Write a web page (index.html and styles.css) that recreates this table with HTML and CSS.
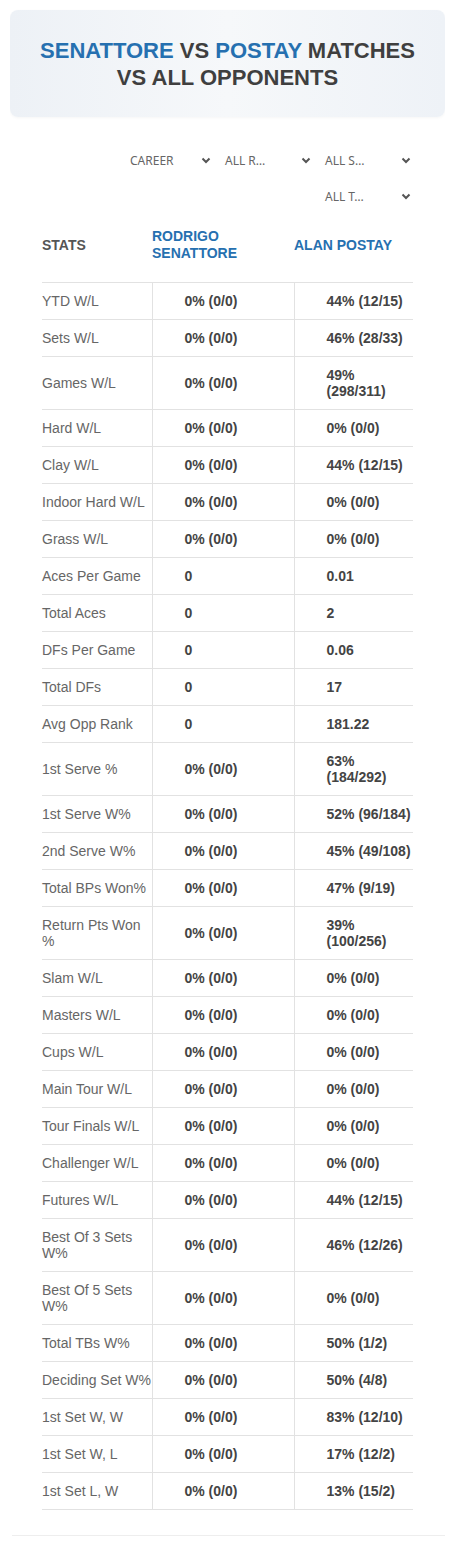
FILE: index.html
```html
<!DOCTYPE html>
<html lang="en">
<head>
    <meta charset="UTF-8">
    <meta name="viewport" content="width=device-width, initial-scale=1.0">
    <title>Senattore vs Postay</title>
    <link rel="stylesheet" href="styles.css">
</head>
<body>
    <!-- Cabecera -->
    <div class="title-box">
        <h1><span class="blue">SENATTORE</span> VS <span class="blue">POSTAY</span> MATCHES VS ALL OPPONENTS</h1>
    </div>

    <div class="content">
        <!-- Filtros -->
        <div class="filters">
            <div class="select select-first"><span>CAREER</span><svg viewBox="0 0 10 7"><path d="M1.5 1.5 L5 5 L8.5 1.5"/></svg></div>
            <div class="select"><span>ALL R…</span><svg viewBox="0 0 10 7"><path d="M1.5 1.5 L5 5 L8.5 1.5"/></svg></div>
            <div class="select"><span>ALL S…</span><svg viewBox="0 0 10 7"><path d="M1.5 1.5 L5 5 L8.5 1.5"/></svg></div>
            <div class="select"><span>ALL T…</span><svg viewBox="0 0 10 7"><path d="M1.5 1.5 L5 5 L8.5 1.5"/></svg></div>
        </div>

        <table class="stats">
            <thead>
                <tr>
                    <th class="col-label">STATS</th>
                    <th class="col-player player">RODRIGO SENATTORE</th>
                    <th class="col-player2 player">ALAN POSTAY</th>
                </tr>
            </thead>
            <tbody>
                <tr><td>YTD W/L</td><td>0% (0/0)</td><td>44% (12/15)</td></tr>
                <tr><td>Sets W/L</td><td>0% (0/0)</td><td>46% (28/33)</td></tr>
                <tr><td>Games W/L</td><td>0% (0/0)</td><td>49% (298/311)</td></tr>
                <tr><td>Hard W/L</td><td>0% (0/0)</td><td>0% (0/0)</td></tr>
                <tr><td>Clay W/L</td><td>0% (0/0)</td><td>44% (12/15)</td></tr>
                <tr><td>Indoor Hard W/L</td><td>0% (0/0)</td><td>0% (0/0)</td></tr>
                <tr><td>Grass W/L</td><td>0% (0/0)</td><td>0% (0/0)</td></tr>
                <tr><td>Aces Per Game</td><td>0</td><td>0.01</td></tr>
                <tr><td>Total Aces</td><td>0</td><td>2</td></tr>
                <tr><td>DFs Per Game</td><td>0</td><td>0.06</td></tr>
                <tr><td>Total DFs</td><td>0</td><td>17</td></tr>
                <tr><td>Avg Opp Rank</td><td>0</td><td>181.22</td></tr>
                <tr><td>1st Serve %</td><td>0% (0/0)</td><td>63% (184/292)</td></tr>
                <tr><td>1st Serve W%</td><td>0% (0/0)</td><td>52% (96/184)</td></tr>
                <tr><td>2nd Serve W%</td><td>0% (0/0)</td><td>45% (49/108)</td></tr>
                <tr><td>Total BPs Won%</td><td>0% (0/0)</td><td>47% (9/19)</td></tr>
                <tr><td>Return Pts Won %</td><td>0% (0/0)</td><td>39% (100/256)</td></tr>
                <tr><td>Slam W/L</td><td>0% (0/0)</td><td>0% (0/0)</td></tr>
                <tr><td>Masters W/L</td><td>0% (0/0)</td><td>0% (0/0)</td></tr>
                <tr><td>Cups W/L</td><td>0% (0/0)</td><td>0% (0/0)</td></tr>
                <tr><td>Main Tour W/L</td><td>0% (0/0)</td><td>0% (0/0)</td></tr>
                <tr><td>Tour Finals W/L</td><td>0% (0/0)</td><td>0% (0/0)</td></tr>
                <tr><td>Challenger W/L</td><td>0% (0/0)</td><td>0% (0/0)</td></tr>
                <tr><td>Futures W/L</td><td>0% (0/0)</td><td>44% (12/15)</td></tr>
                <tr><td>Best Of 3 Sets W%</td><td>0% (0/0)</td><td>46% (12/26)</td></tr>
                <tr><td>Best Of 5 Sets W%</td><td>0% (0/0)</td><td>0% (0/0)</td></tr>
                <tr><td>Total TBs W%</td><td>0% (0/0)</td><td>50% (1/2)</td></tr>
                <tr><td>Deciding Set W%</td><td>0% (0/0)</td><td>50% (4/8)</td></tr>
                <tr><td>1st Set W, W</td><td>0% (0/0)</td><td>83% (12/10)</td></tr>
                <tr><td>1st Set W, L</td><td>0% (0/0)</td><td>17% (12/2)</td></tr>
                <tr><td>1st Set L, W</td><td>0% (0/0)</td><td>13% (15/2)</td></tr>
            </tbody>
        </table>
    </div>

    <div class="bottom-line"></div>
</body>
</html>
```

FILE: styles.css
```css
* {
    margin: 0;
    padding: 0;
    box-sizing: border-box;
}

body {
    margin: 0 10px;
    background: #fff;
    font-family: 'Liberation Sans', Arial, sans-serif;
    color: #444;
}

/* Cabecera con degradado */
.title-box {
    margin-top: 10px;
    padding: 27px 25px 26px;
    border-radius: 8px;
    background: linear-gradient(90deg, #edf1f6 0%, #f6f8fa 50%, #eef2f7 100%);
    box-shadow: 0 1px 3px rgba(0, 0, 0, 0.04);
    text-align: center;
}

.title-box h1 {
    font-size: 22px;
    line-height: 27px;
    font-weight: 700;
    color: #3f3f3f;
}

.blue {
    color: #2670b0;
}

.content {
    padding: 28px 32px 0;
}

/* Filtros (selects) */
.filters {
    display: flex;
    flex-wrap: wrap;
    justify-content: flex-end;
    column-gap: 14px;
    row-gap: 6px;
    padding-right: 2px;
}

.select {
    width: 86px;
    height: 30px;
    display: flex;
    align-items: center;
    justify-content: space-between;
    font-family: 'Noto Sans', sans-serif;
    font-size: 12px;
    color: #666;
}

.select-first {
    width: 81px;
}

.select svg {
    width: 10px;
    height: 7px;
    fill: none;
    stroke: #555;
    stroke-width: 2;
}

/* Tabla de estadisticas */
.stats {
    width: 100%;
    margin-top: 13px;
    border-collapse: collapse;
    table-layout: fixed;
    font-size: 14px;
    line-height: 16px;
}

.col-label {
    width: 110px;
}

.col-player {
    width: 142px;
}

.stats th {
    text-align: left;
    vertical-align: middle;
    font-weight: 700;
    color: #555;
    line-height: 17px;
    padding: 4px 0 20px;
}

.stats th.player {
    color: #2670b0;
}

.stats td {
    padding: 10px 0;
    border-top: 1px solid #e2e2e2;
    border-bottom: 1px solid #e2e2e2;
    vertical-align: middle;
    color: #666;
}

.stats td + td {
    padding-left: 32px;
    padding-right: 2px;
    border-left: 1px solid #e2e2e2;
    font-weight: 700;
    color: #444;
}

.bottom-line {
    margin: 25px 0 0 2px;
    border-top: 1px solid #eeeeee;
}
```
